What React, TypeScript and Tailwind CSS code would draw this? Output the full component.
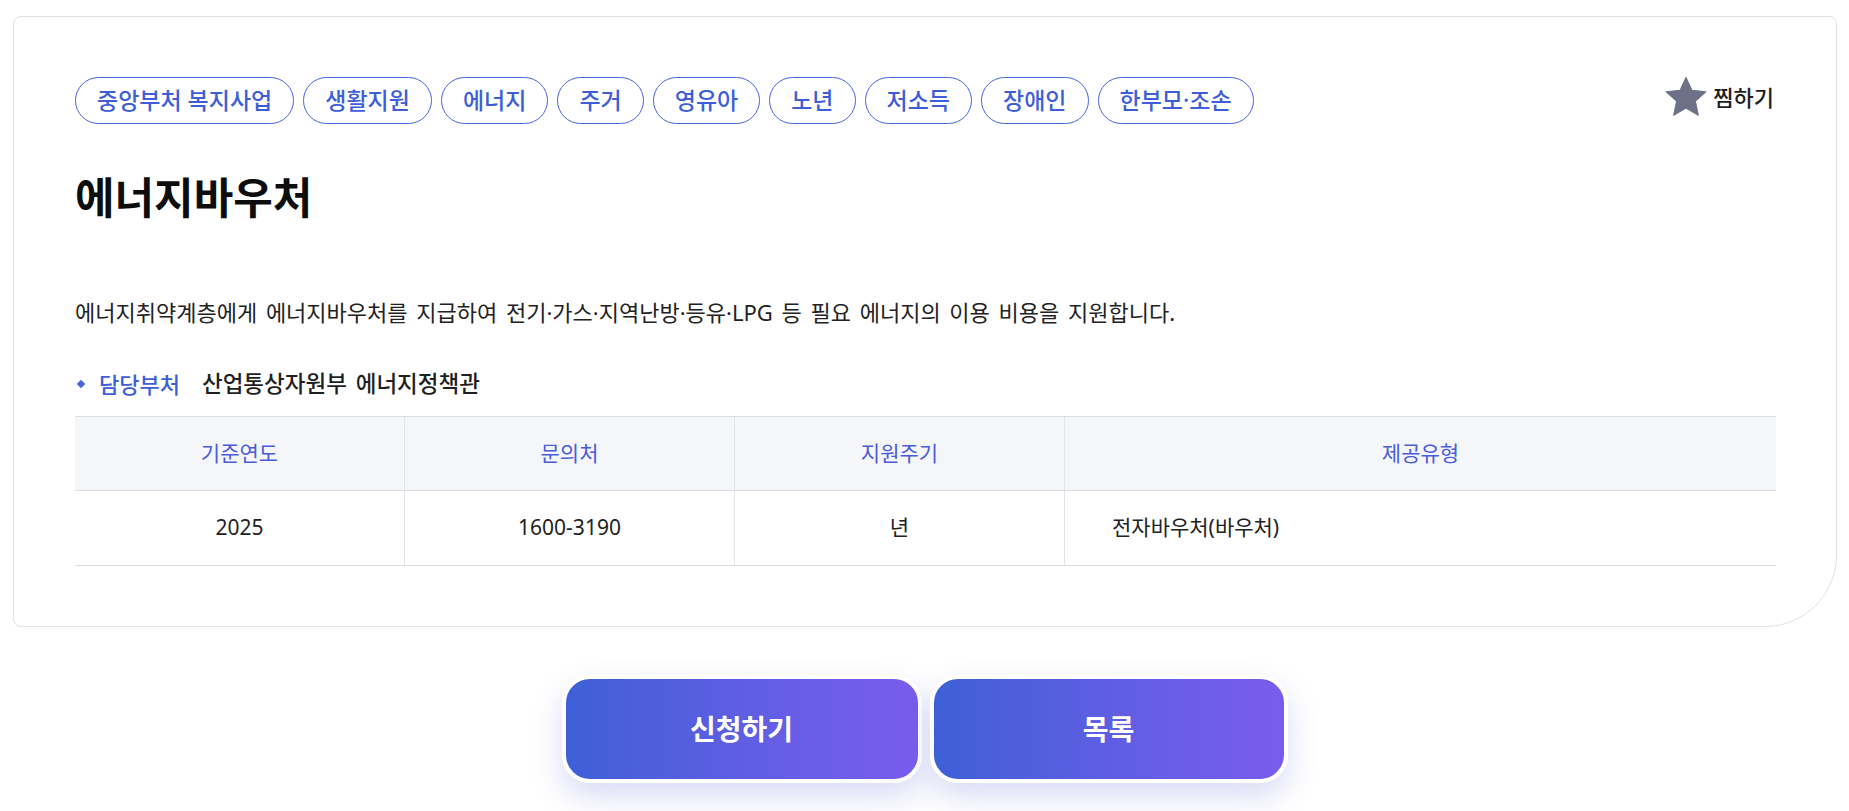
import React from 'react';

const TAGS = ['중앙부처 복지사업', '생활지원', '에너지', '주거', '영유아', '노년', '저소득', '장애인', '한부모·조손'];

const INFO = [
  { head: '기준연도', value: '2025' },
  { head: '문의처', value: '1600-3190' },
  { head: '지원주기', value: '년' },
];

const font = { fontFamily: "'Noto Sans', 'Noto Sans CJK KR', sans-serif" };

function StarIcon() {
  return (
    <svg width="42" height="40" viewBox="0 0 24 23" className="shrink-0">
      <polygon
        points="12,0.3 15.4,7.6 23.4,8.5 17.4,13.9 19.1,22 12,17.9 4.9,22 6.6,13.9 0.6,8.5 8.6,7.6"
        fill="#6d7086"
        stroke="#6d7086"
        strokeWidth="0.6"
        strokeLinejoin="round"
      />
    </svg>
  );
}

export default function App() {
  return (
    <div className="min-h-screen bg-white pt-[16px] text-[#222]" style={font}>
      {/* Detail card */}
      <section className="ml-[13px] mr-[12px] rounded-lg rounded-br-[72px] border border-[#e1e1e1] bg-white py-[60px] pl-[61px] pr-[60px]">
        <div className="flex items-start justify-between">
          <ul className="flex gap-[9px]">
            {TAGS.map((tag) => (
              <li
                key={tag}
                className="flex h-[47px] items-center rounded-full border border-[#4666dd] px-[21px] text-[23px] font-medium leading-none text-[#3d5ed8]"
              >
                {tag}
              </li>
            ))}
          </ul>
          <button className="mr-[2px] flex items-center gap-[6px] text-[22px] font-medium leading-none text-[#1f1f1f]">
            <StarIcon />
            <span>찜하기</span>
          </button>
        </div>

        <h1 className="mt-[50px] text-[43px] font-bold leading-[48px] text-[#0d0d0d]">에너지바우처</h1>

        <p className="mt-[75px] text-[22px] leading-[30px] text-[#222] [word-spacing:3px]">
          에너지취약계층에게 에너지바우처를 지급하여 전기·가스·지역난방·등유·LPG 등 필요 에너지의 이용 비용을 지원합니다.
        </p>

        <div className="mt-[42px] flex items-center text-[22px] leading-[30px]">
          <span className="ml-[3px] mr-[15px] h-[6px] w-[6px] rotate-45 bg-[#4a63dc]"></span>
          <span className="font-medium text-[#3d5ed8]">담당부처</span>
          <span className="ml-[22px] text-[22.5px] font-medium text-[#1f1f1f] [word-spacing:3px]">
            산업통상자원부 에너지정책관
          </span>
        </div>

        {/* Info table */}
        <div className="mt-[17px] border-t border-[#dcdde1]">
          <div className="grid grid-cols-[329px_330px_330px_1fr] border-b border-[#dcdde1] bg-[#f5f6fa] text-[21px] text-[#4a5cdb]">
            {INFO.map((c, i) => (
              <div
                key={c.head}
                className={`flex h-[73px] items-center justify-center ${i > 0 ? 'border-l border-[#e3e4e8]' : ''}`}
              >
                {c.head}
              </div>
            ))}
            <div className="flex h-[73px] items-center justify-center border-l border-[#e3e4e8]">제공유형</div>
          </div>
          <div className="grid grid-cols-[329px_330px_330px_1fr] border-b border-[#dcdde1] text-[21px] text-[#222]">
            {INFO.map((c, i) => (
              <div
                key={c.head}
                className={`flex h-[74px] items-center justify-center ${i > 0 ? 'border-l border-[#e3e4e8]' : ''}`}
              >
                {c.value}
              </div>
            ))}
            <div className="flex h-[74px] items-center border-l border-[#e3e4e8] pl-[47px]">전자바우처(바우처)</div>
          </div>
        </div>
      </section>

      {/* Actions */}
      <div className="mt-[48px] flex justify-center gap-[8px]">
        <button className="h-[108px] w-[360px] rounded-[28px] border-4 border-white bg-gradient-to-r from-[#3d5fd7] to-[#7a5ced] text-[28px] font-bold text-white shadow-[0_14px_30px_rgba(88,96,210,0.22)]">
          신청하기
        </button>
        <button className="h-[108px] w-[358px] rounded-[28px] border-4 border-white bg-gradient-to-r from-[#3d5fd7] to-[#7a5ced] text-[28px] font-bold text-white shadow-[0_14px_30px_rgba(88,96,210,0.22)]">
          목록
        </button>
      </div>
    </div>
  );
}
